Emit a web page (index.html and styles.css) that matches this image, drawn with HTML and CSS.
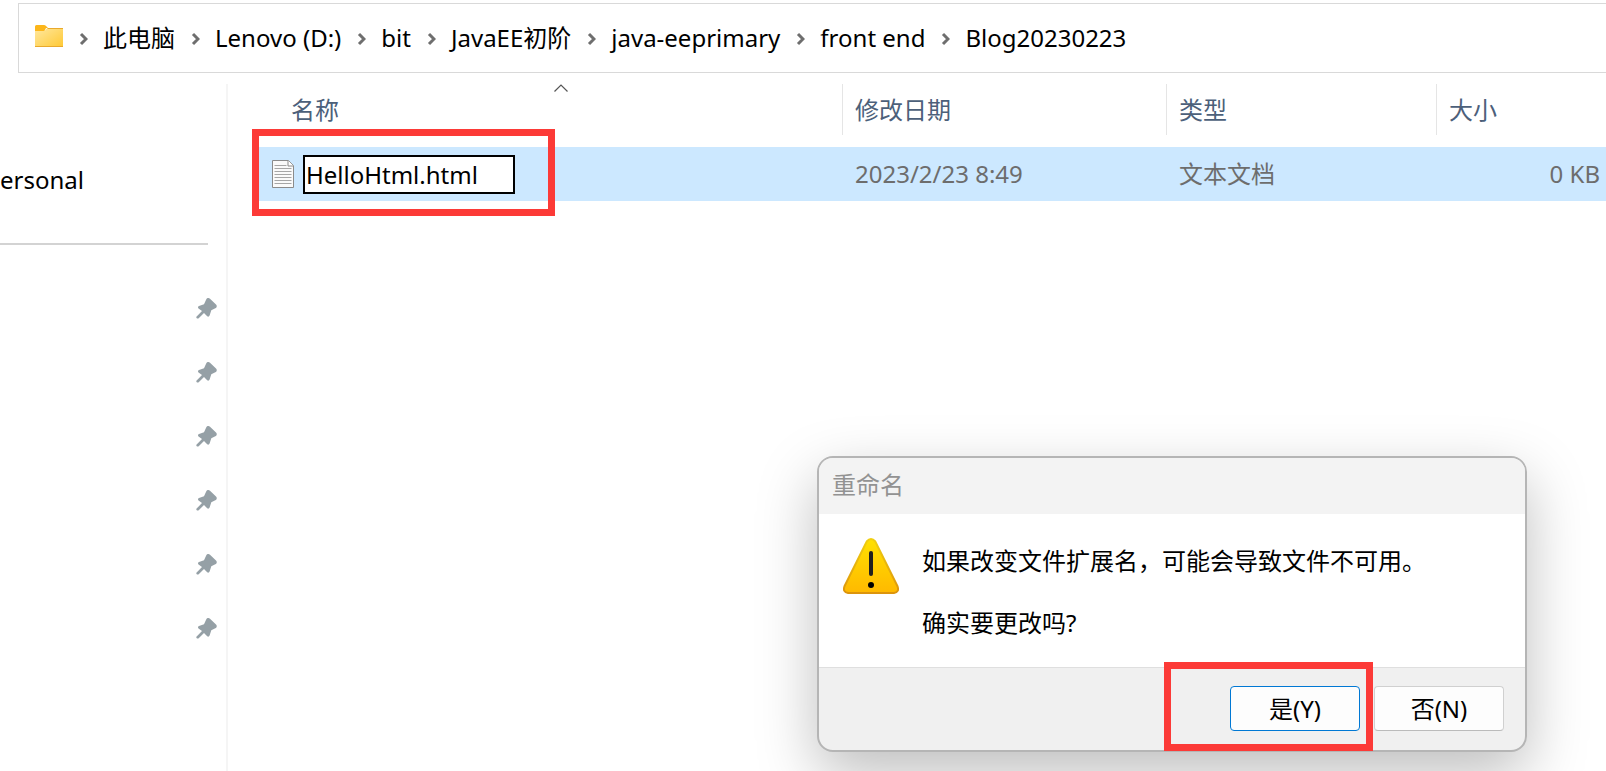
FILE: index.html
```html
<!DOCTYPE html>
<html lang="zh-CN">
<head>
<meta charset="utf-8">
<title>Blog20230223</title>
<link rel="stylesheet" href="styles.css">
</head>
<body>
<svg class="defs" aria-hidden="true">
  <defs>
    <symbol id="chevron" viewBox="0 0 9 14"><path d="M2 2l5 5-5 5" fill="none" stroke="#6e6e6e" stroke-width="3"/></symbol>
    <symbol id="pin" viewBox="0 0 21 21"><path d="M10.2 1.5c.8-1.6 2.6-1.9 3.800-.8l6 5.800c1.300 1.300.9 3.100-.7 3.700l-4 2-1.700 5.400c-.4 1.200-1.600 1.500-2.400.7L8 15l-5.300 5.200c-.9.9-2.900.1-2.300-1.500L6 13 2.500 10.400c-.9-.8-.6-2 .5-2.400l5-1.700z" fill="#95a0a6"/></symbol>
  </defs>
</svg>

<nav class="address" aria-label="地址">
  <svg class="folder" viewBox="0 0 28 22" aria-hidden="true">
    <defs><linearGradient id="fg" x1="0" y1="0" x2="1" y2="1"><stop offset="0" stop-color="#ffe8a0"/><stop offset="1" stop-color="#ffc934"/></linearGradient></defs>
    <path d="M0 1.500Q0 0 1.500 0H9q1 0 1.800.8L13 3h-2L9 7H0z" fill="#fcb61a"/>
    <path d="M0 6h8.500q1 0 1.700-.8l1.600-1.600Q12.400 3 13.400 3H27q1 0 1 1v17q0 1-1 1H1q-1 0-1-1z" fill="url(#fg)"/>
    <path d="M12.500 3.500H28M0 21.500h28" stroke="#e9a92c" stroke-width="1"/>
  </svg>
  <ol class="crumbs">
    <li><svg class="chevron"><use href="#chevron"/></svg><a href="#">此电脑</a></li>
    <li><svg class="chevron"><use href="#chevron"/></svg><a href="#">Lenovo (D:)</a></li>
    <li><svg class="chevron"><use href="#chevron"/></svg><a href="#">bit</a></li>
    <li><svg class="chevron"><use href="#chevron"/></svg><a href="#">JavaEE初阶</a></li>
    <li><svg class="chevron"><use href="#chevron"/></svg><a href="#">java-eeprimary</a></li>
    <li><svg class="chevron"><use href="#chevron"/></svg><a href="#">front end</a></li>
    <li><svg class="chevron"><use href="#chevron"/></svg><a href="#">Blog20230223</a></li>
  </ol>
</nav>

<div class="explorer">
  <aside class="sidebar">
    <div class="account">ersonal</div>
    <hr class="divider">
    <ul class="pins">
      <li><svg class="pin"><use href="#pin"/></svg></li>
      <li><svg class="pin"><use href="#pin"/></svg></li>
      <li><svg class="pin"><use href="#pin"/></svg></li>
      <li><svg class="pin"><use href="#pin"/></svg></li>
      <li><svg class="pin"><use href="#pin"/></svg></li>
      <li><svg class="pin"><use href="#pin"/></svg></li>
    </ul>
  </aside>

  <main class="files">
    <table class="list">
      <colgroup><col><col class="col-date"><col class="col-type"><col class="col-size"></colgroup>
      <thead>
        <tr>
          <th class="name"><div class="head">名称<svg class="sort" viewBox="0 0 14 8"><path d="M.5 7.500L7 1l6.500 6.500" fill="none" stroke="#555" stroke-width="1.200"/></svg></div></th>
          <th><div class="head">修改日期</div></th>
          <th><div class="head">类型</div></th>
          <th><div class="head">大小</div></th>
        </tr>
      </thead>
      <tbody>
        <tr>
          <td class="name">
            <div class="file">
              <svg class="doc" viewBox="0 0 22 28" aria-hidden="true">
                <path d="M.5.5h16l5 5v22H.5z" fill="#fafafa" stroke="#8b8b8b"/>
                <path d="M16 .5V6h5.500" fill="#fff" stroke="#8b8b8b"/>
                <path d="M2.500 5.500h12M2.500 8.500h17M2.500 11.500h17M2.500 14.500h17M2.500 17.500h17M2.500 20.500h17M2.500 23.500h17" stroke="#a6a6a6"/>
              </svg>
              <input class="rename" type="text" value="HelloHtml.html" aria-label="文件名">
            </div>
            <span class="mark mark-file"></span>
          </td>
          <td>2023/2/23 8:49</td>
          <td>文本文档</td>
          <td class="size">0 KB</td>
        </tr>
      </tbody>
    </table>
  </main>
</div>

<section class="dialog" role="dialog" aria-labelledby="dialog-title">
  <h1 class="dialog-title" id="dialog-title">重命名</h1>
  <div class="dialog-body">
    <svg class="warning" viewBox="0 0 56 56" aria-hidden="true">
      <defs>
        <linearGradient id="wg" x1="0" y1="0" x2="0" y2="1"><stop offset="0" stop-color="#ffe100"/><stop offset="1" stop-color="#ffb900"/></linearGradient>
        <linearGradient id="ws" x1="0" y1="0" x2="0" y2="1"><stop offset="0" stop-color="#f0cf10"/><stop offset="1" stop-color="#dc940c"/></linearGradient>
      </defs>
      <path d="M23.700 3.500Q28-1.500 32.300 3.500L54.600 48.500Q56.500 54 51 55H5Q-.5 54 1.400 48.500z" fill="url(#wg)" stroke="url(#ws)" stroke-width="2"/>
      <path d="M28 15v21" stroke="#1f1f1f" stroke-width="4" stroke-linecap="round"/>
      <circle cx="28" cy="47" r="3" fill="#000"/>
    </svg>
    <div class="message">
      <p>如果改变文件扩展名，可能会导致文件不可用。</p>
      <p>确实要更改吗?</p>
    </div>
  </div>
  <div class="dialog-actions">
    <div class="yes-wrap">
      <button class="button primary" type="button">是(Y)</button>
      <span class="mark mark-yes"></span>
    </div>
    <button class="button" type="button">否(N)</button>
  </div>
</section>
</body>
</html>
```
FILE: styles.css
```css
* { box-sizing: border-box; }

body {
  margin: 0;
  min-height: 100vh;
  display: flex;
  flex-direction: column;
  position: relative;
  overflow: hidden;
  background: #fff;
  color: #000;
  font: 24px/32px "Noto Sans", "Noto Sans CJK SC", sans-serif;
}

.defs { position: absolute; width: 0; height: 0; }

.address {
  display: flex;
  align-items: center;
  height: 70px;
  margin: 3px 0 11px 18px;
  padding-left: 16px;
  border: 1px solid #d9d9d9;
  border-right: 0;
}

.folder { width: 28px; height: 22px; margin-bottom: 4px; }

.crumbs {
  display: flex;
  margin: 0;
  padding: 0;
  list-style: none;
  white-space: nowrap;
}

.crumbs li { display: flex; align-items: center; }
.crumbs a { color: inherit; text-decoration: none; }
.chevron { width: 9px; height: 14px; margin: 2px 15px 0 16px; }

.explorer { flex: 1; display: flex; }

.sidebar {
  flex: none;
  width: 228px;
  border-right: 2px solid #f5f5f5;
}

.account { padding-top: 80px; }

.divider {
  height: 2px;
  margin: 47px 18px 31px 0;
  border: 0;
  background: #d3d3d3;
}

.pins { margin: 0; padding: 0; list-style: none; }

.pins li {
  display: flex;
  align-items: center;
  justify-content: flex-end;
  height: 64px;
  padding: 0 9px;
}

.pin { width: 21px; height: 21px; }

.files { flex: 1; min-width: 0; padding-left: 31px; }

.list {
  width: 100%;
  table-layout: fixed;
  border-collapse: collapse;
}

.col-date { width: 324px; }
.col-type { width: 270px; }
.col-size { width: 170px; }

.list th { padding: 0 0 12px; font-weight: 400; text-align: left; color: #4c607a; }

.head {
  height: 51px;
  padding: 10px 12px;
  border-left: 1px solid #e5e5e5;
}

.name { position: relative; }
.name .head { padding-left: 32px; border-left: 0; }

.sort {
  position: absolute;
  top: 0;
  left: calc(50% + 3px);
  width: 14px;
  height: 8px;
}

.list td {
  height: 54px;
  padding: 0 6px 0 13px;
  background: #cce8ff;
  color: #6d6d6d;
}

.list .size { text-align: right; }

.file { display: flex; align-items: center; gap: 9px; }
.doc { width: 22px; height: 28px; }

.rename {
  width: 212px;
  height: 39px;
  padding: 0 1px;
  border: 2px solid #000;
  outline: 0;
  background: #fff;
  color: #000;
  font: inherit;
}

.mark { position: absolute; border: 7px solid #fc3a37; pointer-events: none; }
.mark-file { top: -18px; left: -7px; width: 303px; height: 87px; }
.mark-yes { top: -24px; left: -66px; width: 209px; height: 89px; }

.dialog {
  position: absolute;
  top: 456px;
  left: 817px;
  width: 710px;
  border: 2px solid #b5b5b5;
  border-radius: 16px;
  background: #f0f0f0;
  box-shadow: 0 22px 60px rgba(0, 0, 0, 0.26);
}

.dialog-title {
  margin: 0;
  padding: 11px 13px 13px;
  border-radius: 14px 14px 0 0;
  background: #f3f3f3;
  color: #929292;
  font-size: 24px;
  font-weight: 400;
}

.dialog-body {
  display: flex;
  gap: 23px;
  padding: 24px 24px 28px;
  border-bottom: 1px solid #dfdfdf;
  background: #fff;
}

.warning { width: 56px; height: 56px; }

.message { display: flex; flex-direction: column; gap: 30px; padding-top: 7px; }
.message p { margin: 0; }

.dialog-actions {
  display: flex;
  justify-content: flex-end;
  gap: 14px;
  padding: 18px 21px 19px;
}

.yes-wrap { position: relative; }

.button {
  display: block;
  width: 130px;
  height: 45px;
  padding: 0;
  border: 1px solid #d0d0d0;
  border-bottom-color: #bbb;
  border-radius: 4px;
  background: #fdfdfd;
  color: #000;
  font: inherit;
}

.primary { border-color: #0078d4; }
```
